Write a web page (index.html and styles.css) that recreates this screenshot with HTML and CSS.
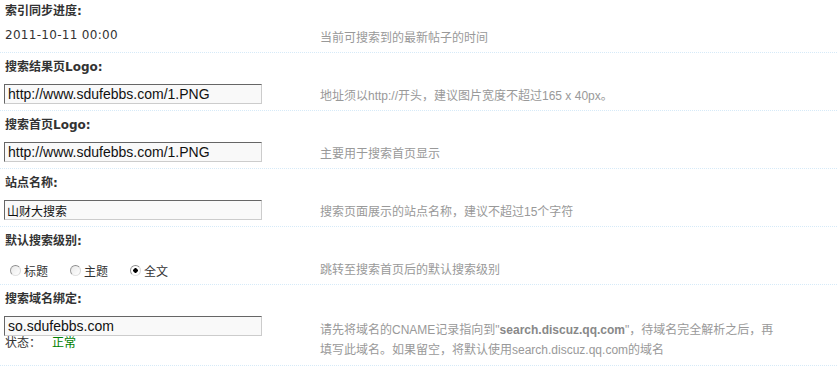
FILE: index.html
```html
<!DOCTYPE html>
<html>

<head>
    <meta charset='utf-8'>
    <title>搜索设置</title>
    <link rel="stylesheet" href="styles.css">
</head>

<body>
    <div class="setting">
        <div class="hd first">索引同步进度:</div>
        <div class="row">
            <div class="field date">2011-10-11 00:00</div>
            <div class="tip">当前可搜索到的最新帖子的时间</div>
        </div>

        <div class="hd">搜索结果页Logo:</div>
        <div class="row">
            <div class="field"><input type="text" class="txt" value="http://www.sdufebbs.com/1.PNG"></div>
            <div class="tip">地址须以http://开头，建议图片宽度不超过165 x 40px。</div>
        </div>

        <div class="hd">搜索首页Logo:</div>
        <div class="row">
            <div class="field"><input type="text" class="txt" value="http://www.sdufebbs.com/1.PNG"></div>
            <div class="tip">主要用于搜索首页显示</div>
        </div>

        <div class="hd">站点名称:</div>
        <div class="row">
            <div class="field"><input type="text" class="txt cn" value="山财大搜索"></div>
            <div class="tip">搜索页面展示的站点名称，建议不超过15个字符</div>
        </div>

        <div class="hd">默认搜索级别:</div>
        <div class="row">
            <div class="field radios">
                <label class="opt"><input type="radio" name="level" class="radio"> 标题</label>
                <label class="opt"><input type="radio" name="level" class="radio"> 主题</label>
                <label class="opt"><input type="radio" name="level" class="radio" checked> 全文</label>
            </div>
            <div class="tip">跳转至搜索首页后的默认搜索级别</div>
        </div>

        <div class="hd">搜索域名绑定:</div>
        <div class="row">
            <div class="field">
                <input type="text" class="txt" value="so.sdufebbs.com">
                <div class="status">状态：<span class="ok">正常</span></div>
            </div>
            <div class="tip wide">请先将域名的CNAME记录指向到"<b>search.discuz.qq.com</b>"，待域名完全解析之后，再填写此域名。如果留空，将默认使用search.discuz.qq.com的域名</div>
        </div>
    </div>
</body>
</html>
```

FILE: styles.css
```css
body {
    margin: 0;
    background: #fff;
    color: #333;
    font: 12px "DejaVu Sans", "Noto Sans CJK SC", sans-serif;
}

.hd {
    height: 29px;
    line-height: 29px;
    padding-left: 5px;
    font-weight: bold;
    color: #333;
}

.hd.first {
    height: 23px;
    line-height: 23px;
}

.row {
    display: flex;
    align-items: center;
    min-height: 28px;
    padding-left: 4px;
    border-bottom: 1px dotted #d6eaf8;
}

.field {
    flex: none;
    width: 316px;
    align-self: flex-start;
    padding-top: 2px;
}

.date {
    height: 29px;
    line-height: 24px;
    padding-top: 0;
    padding-left: 1px;
    width: 315px;
    letter-spacing: 0.3px;
}

.tip {
    color: #999;
    font-family: "Liberation Sans", "Noto Sans CJK SC", sans-serif;
    line-height: 20px;
}

.tip b {
    color: #888;
}

.tip.wide {
    width: 458px;
}

.txt {
    box-sizing: border-box;
    display: block;
    width: 258px;
    height: 20px;
    margin: 0 0 6px 0;
    padding: 0 3px;
    border: 1px solid #ccc;
    border-top-color: #666;
    border-left-color: #666;
    background: #f9f9f9;
    color: #111;
    font: 14px "Liberation Sans", "Noto Sans CJK SC", sans-serif;
    outline: 0;
}

.txt.cn {
    font-size: 12px;
    padding-left: 2px;
}

.radios {
    display: flex;
    align-items: center;
    padding-top: 0;
    align-self: center;
    height: 28px;
}

.opt {
    display: flex;
    align-items: center;
    margin-right: 16px;
}

.radio {
    -webkit-appearance: none;
    appearance: none;
    width: 11px;
    height: 11px;
    margin: 0 3px 0 6px;
    border: 1px solid;
    border-color: #8c8c8c #d8d8d8 #e2e2e2 #9c9c9c;
    border-radius: 50%;
    background: linear-gradient(135deg, #e8e8e8, #fff);
    box-sizing: border-box;
}

.radio:checked {
    background: radial-gradient(circle, #000 0, #000 2px, #fff 2.5px);
}

.status {
    margin-top: -6px;
    padding-bottom: 15px;
    line-height: 14px;
    padding-left: 1px;
}

.ok {
    margin-left: 11px;
    color: #008000;
}
```
